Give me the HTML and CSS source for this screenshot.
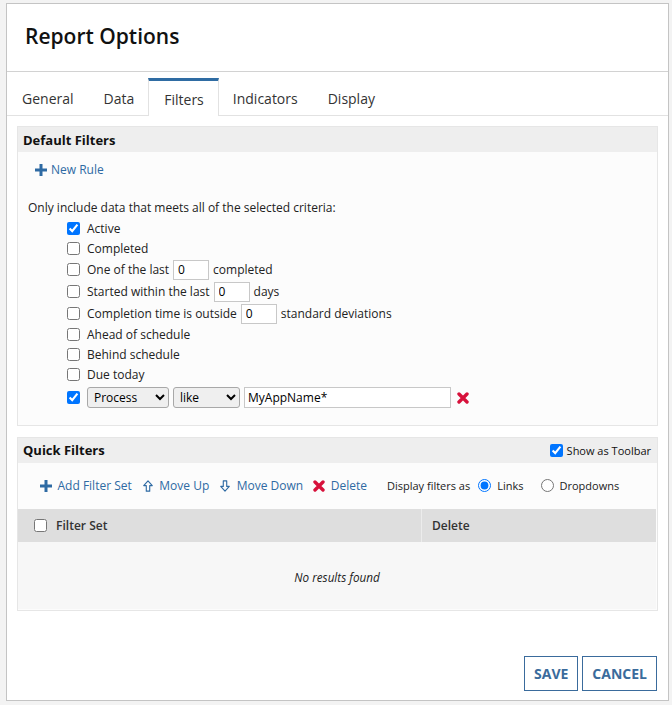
FILE: index.html
```html
<!DOCTYPE html>
<html lang="en">
<head>
    <meta charset="UTF-8">
    <title>Report Options</title>
    <link rel="stylesheet" href="styles.css">
</head>
<body>
    <div class="dialog">
        <div class="dialog-header">
            <h1>Report Options</h1>
        </div>

        <div class="tabs">
            <div class="tab">General</div>
            <div class="tab">Data</div>
            <div class="tab active">Filters</div>
            <div class="tab">Indicators</div>
            <div class="tab">Display</div>
        </div>

        <div class="dialog-body">
            <div class="panel">
                <div class="panel-head">Default Filters</div>
                <div class="panel-body">
                    <a class="link new-rule" href="#">
                        <svg class="ico" viewBox="0 0 12 12"><path d="M4.5 0h3v4.5H12v3H7.5V12h-3V7.5H0v-3h4.5z" fill="#2e6aa3"/></svg>
                        New Rule
                    </a>
                    <p class="intro">Only include data that meets all of the selected criteria:</p>
                    <div class="criteria">
                        <label class="crit"><input type="checkbox" checked> Active</label>
                        <label class="crit"><input type="checkbox"> Completed</label>
                        <label class="crit tall"><input type="checkbox"> One of the last <input class="num" type="text" value="0"> completed</label>
                        <label class="crit tall"><input type="checkbox"> Started within the last <input class="num" type="text" value="0"> days</label>
                        <label class="crit tall"><input type="checkbox"> Completion time is outside <input class="num" type="text" value="0"> standard deviations</label>
                        <label class="crit"><input type="checkbox"> Ahead of schedule</label>
                        <label class="crit"><input type="checkbox"> Behind schedule</label>
                        <label class="crit"><input type="checkbox"> Due today</label>
                        <div class="crit tall last">
                            <input type="checkbox" checked>
                            <select class="sel sel-field"><option>Process</option></select>
                            <select class="sel sel-op"><option>like</option></select>
                            <input class="txt" type="text" value="MyAppName*">
                            <svg class="ico remove" viewBox="0 0 12 12"><path d="M2 2l8 8M10 2l-8 8" stroke="#d7113b" stroke-width="3.4" stroke-linecap="round"/></svg>
                        </div>
                    </div>
                </div>
            </div>

            <div class="panel quick">
                <div class="panel-head">
                    <span>Quick Filters</span>
                    <label class="toolbar-toggle"><input type="checkbox" checked> Show as Toolbar</label>
                </div>
                <div class="toolbar">
                    <a class="link" href="#">
                        <svg class="ico" viewBox="0 0 12 12"><path d="M4.5 0h3v4.5H12v3H7.5V12h-3V7.5H0v-3h4.5z" fill="#2e6aa3"/></svg>
                        Add Filter Set
                    </a>
                    <a class="link" href="#">
                        <svg class="ico" viewBox="0 0 12 14"><path d="M6 1L1 6.5h3V13h4V6.5h3z" fill="none" stroke="#2e6aa3" stroke-width="1.3" stroke-linejoin="round"/></svg>
                        Move Up
                    </a>
                    <a class="link" href="#">
                        <svg class="ico" viewBox="0 0 12 14"><path d="M6 13L1 7.5h3V1h4v6.5h3z" fill="none" stroke="#2e6aa3" stroke-width="1.3" stroke-linejoin="round"/></svg>
                        Move Down
                    </a>
                    <a class="link" href="#">
                        <svg class="ico" viewBox="0 0 12 12"><path d="M2 2l8 8M10 2l-8 8" stroke="#d7113b" stroke-width="3.4" stroke-linecap="round"/></svg>
                        Delete
                    </a>
                    <span class="display-as">Display filters as</span>
                    <label class="radio"><input type="radio" name="disp" checked> Links</label>
                    <label class="radio"><input type="radio" name="disp"> Dropdowns</label>
                </div>
                <table class="grid">
                    <thead>
                        <tr>
                            <th class="col-set"><input type="checkbox"> Filter Set</th>
                            <th class="col-del">Delete</th>
                        </tr>
                    </thead>
                    <tbody>
                        <tr>
                            <td colspan="2" class="empty">No results found</td>
                        </tr>
                    </tbody>
                </table>
            </div>
        </div>

        <div class="dialog-footer">
            <button class="btn">SAVE</button>
            <button class="btn">CANCEL</button>
        </div>
    </div>
</body>
</html>
```

FILE: styles.css
```css
body {
    margin: 0;
    padding: 3px 3px 2px 6px;
    background: #f3f3f3;
    font-family: 'Open Sans', 'Noto Sans', sans-serif;
    font-size: 12px;
    color: #222;
}

.dialog {
    height: 698px;
    box-sizing: border-box;
    background: #fff;
    border: 1px solid #c4c4c4;
    display: flex;
    flex-direction: column;
}

.dialog-header {
    height: 63px;
    padding: 0 0 4px 18px;
    border-bottom: 1px solid #d2d2d2;
    display: flex;
    align-items: center;
}

.dialog-header h1 {
    margin: 0;
    font-size: 21px;
    font-weight: 600;
    color: #111;
}

.tabs {
    display: flex;
    margin-top: 6px;
    height: 37px;
    border-bottom: 1px solid #e2e2e2;
}

.tab {
    padding: 4px 15px 0;
    font-size: 14px;
    color: #333;
    display: flex;
    align-items: center;
}

.tab.active {
    border-top: 3px solid #2f6ca3;
    border-left: 1px solid #e2e2e2;
    border-right: 1px solid #e2e2e2;
    padding: 1px 14px 0 15px;
    margin: 0 -1px -1px -1px;
    background: #fff;
}

.dialog-body {
    padding: 10px 10px 0 10px;
}

.panel {
    border: 1px solid #e6e6e6;
    background: #fcfcfc;
}

.panel.quick {
    margin-top: 11px;
}

.panel-head {
    height: 25px;
    background: #eeeeee;
    display: flex;
    align-items: center;
    justify-content: space-between;
    padding: 0 6px 0 5px;
    font-weight: 700;
    font-size: 13px;
    color: #111;
}

.panel-body {
    padding: 9px 10px 16px 10px;
}

.link {
    color: #2e6aa3;
    text-decoration: none;
    display: inline-flex;
    align-items: center;
    gap: 4px;
}

.ico {
    width: 12px;
    height: 12px;
}

.new-rule {
    margin-left: 7px;
    font-size: 12px;
}

.intro {
    margin: 19px 0 3px;
    font-size: 12px;
}

.criteria {
    margin-left: 38px;
}

.crit {
    display: flex;
    align-items: center;
    height: 20px;
    font-size: 12px;
    gap: 4px;
}

.crit.tall {
    height: 22px;
}

.crit.last {
    margin-top: 2px;
}

.crit input[type=checkbox] {
    margin: 0 3px 0 1px;
    width: 13px;
    height: 13px;
}

.num {
    width: 36px;
    height: 20px;
    box-sizing: border-box;
    border: 1px solid #c8c8c8;
    padding: 0 4px;
    font-family: inherit;
    font-size: 12px;
}

.sel {
    height: 21px;
    box-sizing: border-box;
    border: 1px solid #a8a8a8;
    border-radius: 3px;
    background: #efefef;
    font-family: inherit;
    font-size: 12px;
    padding: 0 2px;
}

.sel-field {
    width: 82px;
}

.sel-op {
    width: 67px;
}

.txt {
    width: 207px;
    height: 21px;
    box-sizing: border-box;
    border: 1px solid #c8c8c8;
    padding: 0 3px;
    font-family: inherit;
    font-size: 12px;
}

.remove {
    margin-left: 2px;
}

.toolbar-toggle {
    display: flex;
    align-items: center;
    gap: 4px;
    font-weight: 400;
    font-size: 11px;
}

.toolbar-toggle input {
    margin: 0;
    width: 13px;
    height: 13px;
}

.toolbar {
    height: 46px;
    display: flex;
    align-items: center;
    padding-left: 22px;
    font-size: 12px;
    gap: 10px;
}

.toolbar .link {
    gap: 5.5px;
}

.display-as {
    margin: 0 -2px 0 10px;
    font-size: 11px;
}

.radio {
    display: flex;
    align-items: center;
    gap: 4px;
    font-size: 11px;
    margin-right: 7px;
}

.radio input {
    margin: 0 2px 0 0;
    width: 13px;
    height: 13px;
}

.grid {
    width: calc(100% - 1px);
    border-collapse: collapse;
    margin-bottom: 1px;
}

.grid th {
    height: 33px;
    background: #dedede;
    text-align: left;
    font-weight: 600;
    font-size: 12px;
    color: #333;
    padding: 0;
}

.col-set {
    padding-left: 16px !important;
    width: 387px;
    border-right: 1px solid #ececec;
}

.col-set input {
    margin: 0 6px 0 0;
    width: 13px;
    height: 13px;
    vertical-align: -2px;
}

.col-del {
    padding-left: 10px !important;
}

.empty {
    height: 64px;
    padding: 3px 0 0;
    background: #f7f7f7;
    text-align: center;
    font-style: italic;
    font-size: 11.7px;
}

.dialog-footer {
    margin-top: auto;
    display: flex;
    justify-content: flex-end;
    gap: 4px;
    padding: 0 11px 9px 0;
}

.btn {
    height: 35px;
    background: #fff;
    border: 1px solid #3a6b9c;
    color: #3a6b9c;
    font-family: inherit;
    font-weight: 700;
    font-size: 14px;
    padding: 0 9px;
}
```
